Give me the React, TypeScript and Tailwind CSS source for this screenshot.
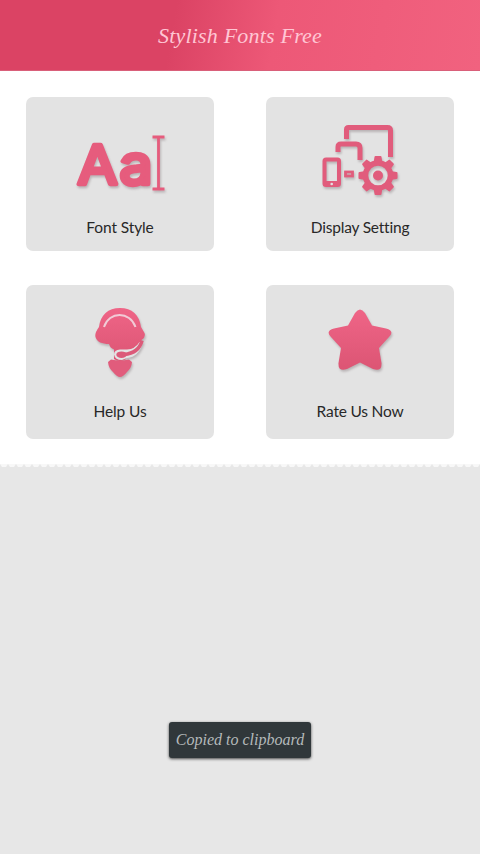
import type { ReactNode } from 'react';

const shadow = 'drop-shadow-[1px_2px_1px_rgba(90,70,75,0.3)]';

function Gradient({ id }: { id: string }) {
  return (
    <defs>
      <linearGradient id={id} x1="0" y1="0" x2="0" y2="1">
        <stop offset="0" stopColor="#ef6587" />
        <stop offset="1" stopColor="#dc5574" />
      </linearGradient>
    </defs>
  );
}

function FontIcon() {
  return (
    <svg viewBox="0 0 96 72" className={`h-[72px] w-24 ${shadow}`}>
      <g
        fill="#e65c7d"
        stroke="#e65c7d"
        strokeWidth="4.5"
        strokeLinejoin="round"
        className="font-['Inter',sans-serif] font-normal"
        fontSize="54"
      >
        <text x="5.500" y="57.500" textLength="40" lengthAdjust="spacingAndGlyphs">A</text>
        <text x="47.500" y="57.500" textLength="33" lengthAdjust="spacingAndGlyphs">a</text>
      </g>
      <path d="M80.500 11h12M86.500 11v52M80.500 63h12" stroke="#e65c7d" strokeWidth="2.800" fill="none" />
    </svg>
  );
}

function DisplayIcon() {
  return (
    <svg viewBox="0 0 80 76" className={`h-[76px] w-20 ${shadow}`} fill="none" stroke="#e15c7c">
      <path d="M26.500 15V5.500q0-2 2-2h39q3 0 3 3V33" strokeWidth="5" />
      <path d="M18 28v-5q0-3 3-3h15q4 0 4 4v12" strokeWidth="5" />
      <rect x="4.500" y="35.500" width="14.500" height="25.500" rx="1.500" strokeWidth="4" />
      <path d="M3 59.500h17" strokeWidth="5" />
      <circle cx="11.700" cy="60" r="1.300" fill="#e3e3e3" stroke="none" />
      <rect x="25.500" y="48" width="7" height="4" strokeWidth="2.800" />
      <circle cx="58" cy="51.500" r="12.500" strokeWidth="5.500" />
      <g fill="#e15c7c" stroke="none">
        {[0, 45, 90, 135, 180, 225, 270, 315].map((angle) => (
          <path key={angle} d="M53.500 39l1-6q0-1 1-1h5q1 0 1 1l1 6z" transform={`rotate(${angle} 58 51.500)`} />
        ))}
        <circle cx="58" cy="51.500" r="5" />
      </g>
    </svg>
  );
}

function HelpIcon() {
  return (
    <svg viewBox="0 0 56 74" className={`h-[74px] w-14 ${shadow}`}>
      <Gradient id="help" />
      <path
        d="M28 2C16 2 8.500 9 7 21Q2.500 27 3.500 31C5 36 10 38 17 38Q18 42 22 43.500V53Q28 57 34 53V48L44 40Q49 37 49.500 34Q54 31 52.500 27L49 21C47.500 9 40 2 28 2Z"
        fill="url(#help)"
      />
      <path d="M12 21C17 5 38 5 43.500 21" fill="none" stroke="#f1cbd6" strokeWidth="2" />
      <path d="M47.500 36Q43 43.500 35 43.500H28Q22 44 22 48.500Q23 54 30 54L35 52Q47 51 51 36Z" fill="#e3e3e3" />
      <path d="M50 34.500Q47 47 32 48.500" fill="none" stroke="#dc5a79" strokeWidth="3.500" />
      <ellipse cx="29.500" cy="48.700" rx="5.200" ry="3.300" fill="#dc5a79" />
      <path d="M19 53.500Q28 55.500 37 53.500L40 56Q39.500 62 35 66Q31 71 28 71T21 66Q16.500 62 16 56Z" fill="#e15c7c" />
    </svg>
  );
}

function StarIcon() {
  return (
    <svg viewBox="0 0 72 72" className={`h-[72px] w-[72px] ${shadow}`}>
      <Gradient id="star" />
      <path
        d="M31 8Q36 1 41 8L48 20.500L62 23.500Q71 26 65 32L55 43L57.500 58Q58 67 49 64L36 57.500L23 64Q14 67 14.500 58L17 43L7 32Q1 26 10 23.500L24 20.500Z"
        fill="url(#star)"
      />
    </svg>
  );
}

interface CardProps {
  label: string;
  iconArea?: string;
  tracking?: string;
  children: ReactNode;
}

function Card({ label, iconArea = 'h-[118px] pt-3', tracking = 'tracking-[-0.1px]', children }: CardProps) {
  return (
    <div className="flex h-[154px] flex-col items-center rounded-[7px] bg-[#e3e3e3]">
      <div className={`flex shrink-0 items-center justify-center ${iconArea}`}>{children}</div>
      <span className={`whitespace-nowrap text-[15.5px] leading-6 text-[#282828] ${tracking}`}>{label}</span>
    </div>
  );
}

export default function App() {
  return (
    <div className="flex h-[854px] w-[480px] flex-col overflow-hidden bg-white font-['Lato',sans-serif]">
      <header className="flex h-[71px] shrink-0 items-center justify-center border-b border-[#d9607a] bg-[linear-gradient(100deg,#db4364_0%,#db4364_36%,#ed5877_57%,#f1627f_100%)]">
        <h1 className="whitespace-nowrap pt-0.5 font-['Liberation_Serif',serif] text-[22px] italic leading-none tracking-[0.2px] text-[#ffc6d4]">
          Stylish Fonts Free
        </h1>
      </header>
      <main className="grid h-[393px] shrink-0 grid-cols-[188px_188px] content-start justify-center gap-x-[52px] gap-y-[34px] pt-[26px]">
        <Card label="Font Style">
          <FontIcon />
        </Card>
        <Card label="Display Setting" tracking="tracking-[-0.2px]">
          <DisplayIcon />
        </Card>
        <Card label="Help Us" iconArea="h-[114px] pt-0.5">
          <HelpIcon />
        </Card>
        <Card label="Rate Us Now" iconArea="h-[114px] pb-0.5" tracking="tracking-[-0.2px]">
          <StarIcon />
        </Card>
      </main>
      <section className="flex flex-1 flex-col items-center bg-[#e7e7e7]">
        <svg className="h-1 w-full shrink-0">
          <defs>
            <pattern id="edge" width="8" height="4" patternUnits="userSpaceOnUse">
              <path d="M0 0H8L6 3H2Z" fill="#f8f8f8" />
            </pattern>
          </defs>
          <rect width="480" height="4" fill="url(#edge)" />
        </svg>
        <div className="mt-[254px] flex h-9 w-[142px] items-center justify-center rounded-[3px] bg-[#30373a] shadow-[0_1px_3px_rgba(0,0,0,0.7)]">
          <span className="whitespace-nowrap font-['Liberation_Serif',serif] text-[16px] italic leading-[26px] text-[#b5babb]">
            Copied to clipboard
          </span>
        </div>
      </section>
    </div>
  );
}
